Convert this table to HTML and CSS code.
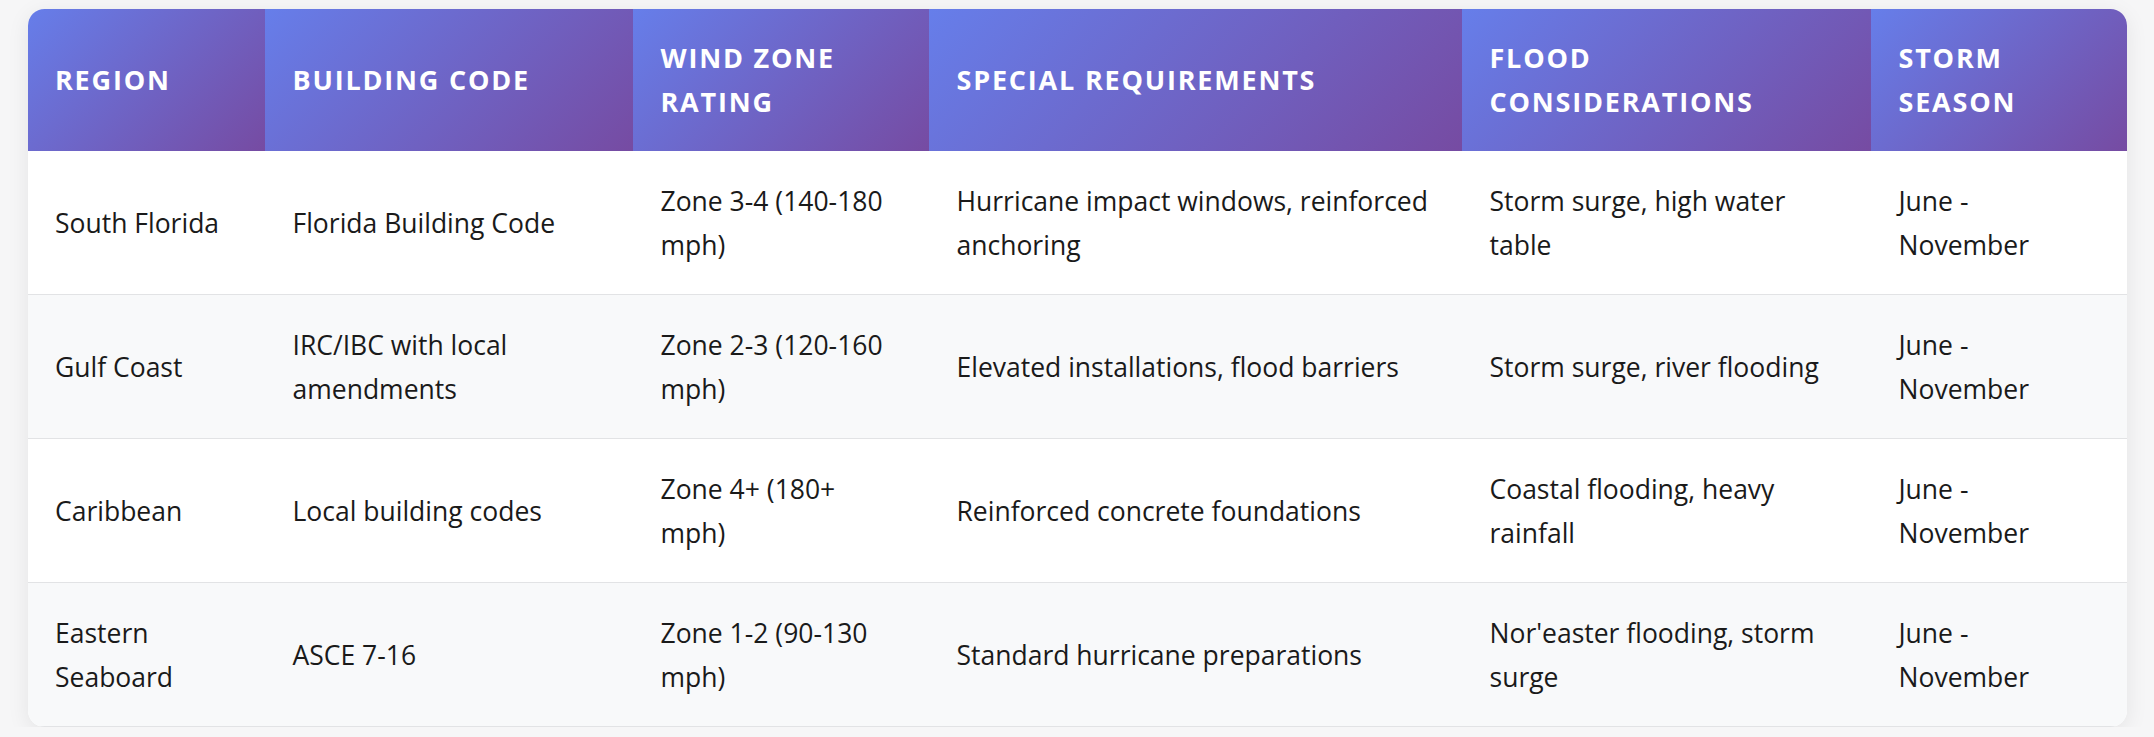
FILE: index.html
```html
<!DOCTYPE html>
<html lang="en">
<head>
<meta charset="utf-8">
<title>Regional Building Requirements</title>
<link rel="stylesheet" href="styles.css">
</head>
<body>
<div class="table-card">
  <table class="req-table">
    <colgroup>
      <col class="c-region">
      <col class="c-code">
      <col class="c-wind">
      <col class="c-special">
      <col class="c-flood">
      <col class="c-season">
    </colgroup>
    <thead>
      <tr>
        <th>Region</th>
        <th>Building Code</th>
        <th>Wind Zone Rating</th>
        <th>Special Requirements</th>
        <th>Flood Considerations</th>
        <th>Storm Season</th>
      </tr>
    </thead>
    <tbody>
      <tr>
        <td>South Florida</td>
        <td>Florida Building Code</td>
        <td>Zone 3-4 (140-180 mph)</td>
        <td>Hurricane impact windows, reinforced anchoring</td>
        <td>Storm surge, high water table</td>
        <td>June - November</td>
      </tr>
      <tr>
        <td>Gulf Coast</td>
        <td>IRC/IBC with local amendments</td>
        <td>Zone 2-3 (120-160 mph)</td>
        <td>Elevated installations, flood barriers</td>
        <td>Storm surge, river flooding</td>
        <td>June - November</td>
      </tr>
      <tr>
        <td>Caribbean</td>
        <td>Local building codes</td>
        <td>Zone 4+ (180+ mph)</td>
        <td>Reinforced concrete foundations</td>
        <td>Coastal flooding, heavy rainfall</td>
        <td>June - November</td>
      </tr>
      <tr>
        <td>Eastern Seaboard</td>
        <td>ASCE 7-16</td>
        <td>Zone 1-2 (90-130 mph)</td>
        <td>Standard hurricane preparations</td>
        <td>Nor'easter flooding, storm surge</td>
        <td>June - November</td>
      </tr>
    </tbody>
  </table>
</div>
</body>
</html>
```

FILE: styles.css
```css
html, body {
  margin: 0;
  padding: 0;
}

body {
  background: #f6f6f7;
  padding: 9px 27.5px 0;
  font-family: "Open Sans", "Noto Sans", "Liberation Sans", sans-serif;
  font-size: 26.5px;
  line-height: 44px;
  color: #1a1a1a;
}

.table-card {
  background: #ffffff;
  border-radius: 16.5px;
  overflow: hidden;
  box-shadow: 0 5px 22px rgba(0, 0, 0, 0.08);
}

.req-table {
  width: 100%;
  border-collapse: collapse;
  table-layout: fixed;
}

.c-region { width: 237.5px; }
.c-code { width: 368px; }
.c-wind { width: 296px; }
.c-special { width: 533px; }
.c-flood { width: 409px; }
.c-season { width: 255.5px; }

.req-table th {
  background: linear-gradient(135deg, #667eea 0%, #764ba2 100%);
  color: #ffffff;
  font-size: 27px;
  font-weight: 700;
  text-transform: uppercase;
  letter-spacing: 1.8px;
  text-align: left;
  vertical-align: middle;
  padding: 27px 27.5px;
}

.req-table td {
  padding: 27.5px 27.5px;
  vertical-align: middle;
  text-align: left;
  border-bottom: 1px solid #e2e3e5;
}

.req-table tbody tr:nth-child(even) {
  background: #f8f9fa;
}
```
